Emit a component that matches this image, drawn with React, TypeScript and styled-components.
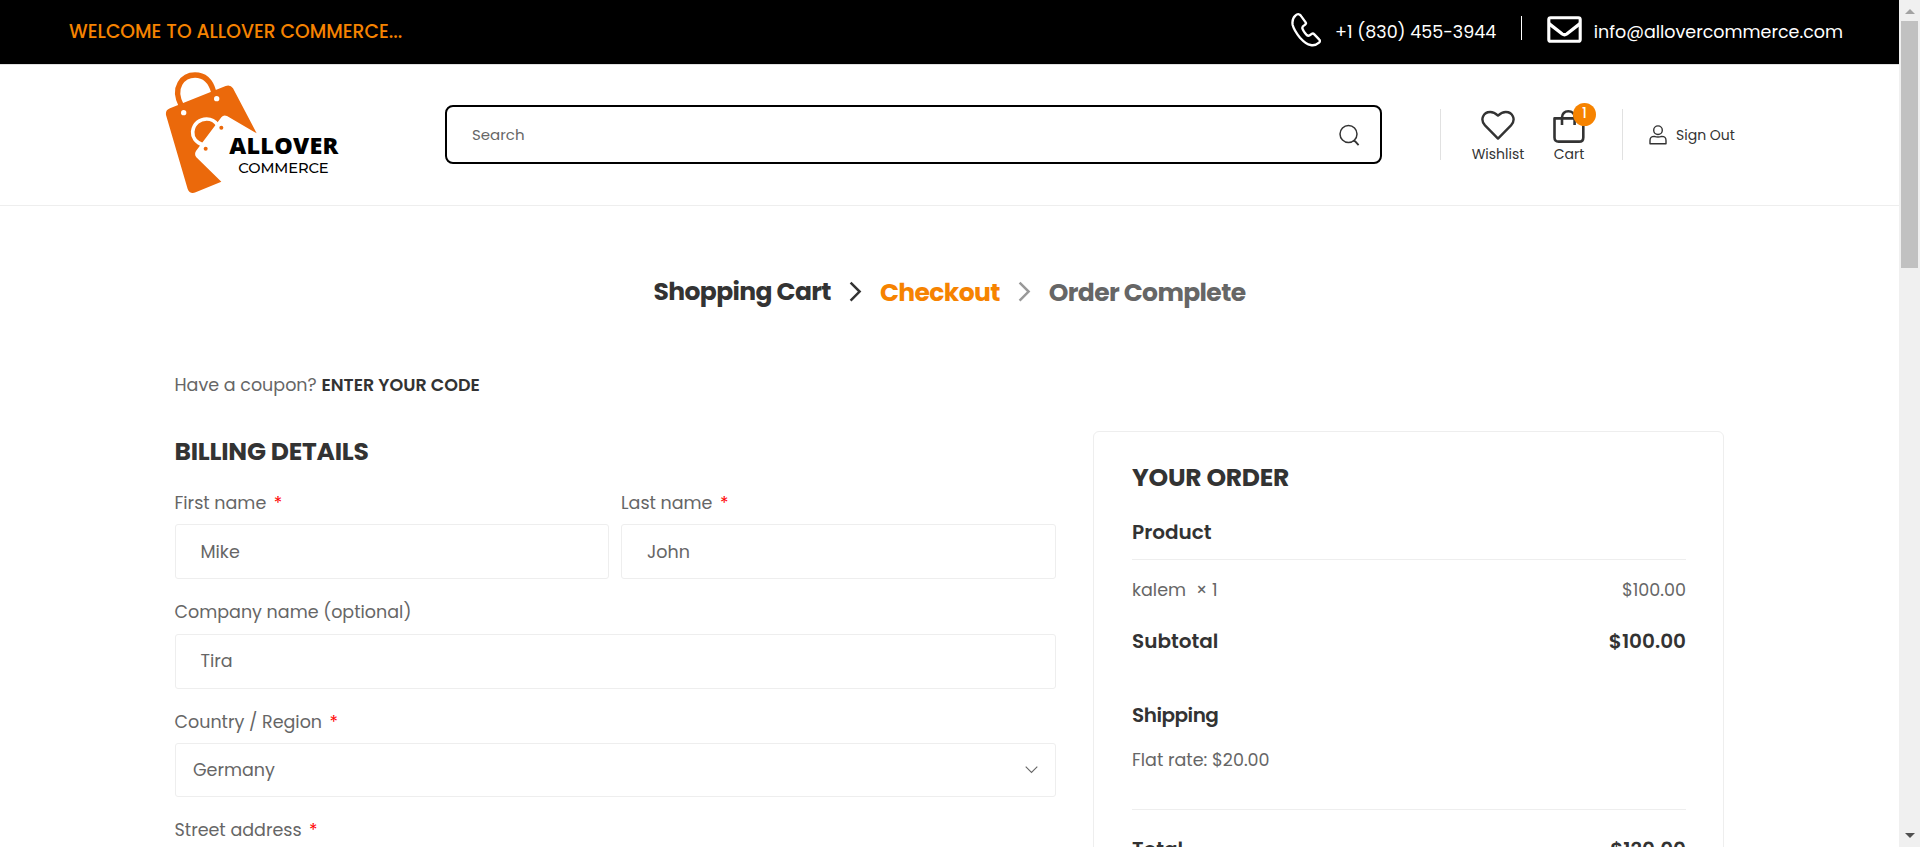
import React from "react";
import styled, { createGlobalStyle } from "styled-components";

const GlobalStyle = createGlobalStyle`
  *, *::before, *::after { box-sizing: border-box; }
  body {
    margin: 0;
    background: #fff;
    color: #666;
    font-family: Poppins, Inter, "Liberation Sans", sans-serif;
    font-size: 17.5px;
    overflow: hidden;
  }
  h2, h3, h4, p { margin: 0; }
`;

const Window = styled.div`
  display: flex;
  height: 847px;
  overflow: hidden;
`;

const Page = styled.div`
  width: 1899px;
  flex: none;
  overflow: hidden;
`;

/* Top bar */
const TopBar = styled.div`
  display: flex;
  align-items: center;
  justify-content: space-between;
  height: 65px;
  padding: 0 56px 1px 69px;
  background: #000;
  border-bottom: 1px solid #e1e1e1;
  color: #fff;
  white-space: nowrap;
`;

const Welcome = styled.span`
  color: #f68300;
  font-size: 18.75px;
  font-weight: 500;
`;

const Contacts = styled.div`
  display: flex;
  align-items: center;

  svg { flex: none; margin-bottom: 4px; }
`;

const ContactText = styled.span<{ $gap: number }>`
  margin-left: ${(p) => p.$gap}px;
`;

const TopDivider = styled.span`
  width: 1px;
  height: 24px;
  margin: 0 25px 7px 24.5px;
  background: #fff;
`;

/* Header */
const Header = styled.header`
  display: flex;
  align-items: center;
  height: 141px;
  padding: 0 0 1px 155px;
  border-bottom: 1px solid #eee;
  color: #333;
`;

const Logo = styled.svg`
  width: 200px;
  height: 135px;
  margin-bottom: 5px;
  flex: none;
`;

const SearchBox = styled.div`
  display: flex;
  align-items: center;
  justify-content: space-between;
  width: 937px;
  height: 59px;
  margin-left: 90px;
  padding: 0 20px 0 25px;
  border: 2px solid #000;
  border-radius: 8px;
  color: #666;
  font-size: 15px;
`;

const HeaderDivider = styled.span<{ $left: number; $right: number }>`
  width: 1px;
  height: 51px;
  margin: 0 ${(p) => p.$right}px 0 ${(p) => p.$left}px;
  background: #e1e1e1;
`;

const IconLink = styled.div<{ $width: number }>`
  position: relative;
  display: flex;
  flex-direction: column;
  align-items: center;
  justify-content: space-between;
  width: ${(p) => p.$width}px;
  height: 55px;
  margin-top: 4px;
  font-size: 14px;
  line-height: 20px;

  & + & { margin-left: 29px; }
`;

const CartBadge = styled.span`
  position: absolute;
  top: -6px;
  left: 20px;
  width: 23px;
  height: 23px;
  border-radius: 50%;
  background: #f68300;
  color: #fff;
  font-size: 13.75px;
  font-weight: 500;
  line-height: 21px;
  text-align: center;
`;

const Account = styled.div`
  display: flex;
  align-items: center;
  gap: 9px;
  padding-top: 1px;
  font-size: 14px;
`;

/* Checkout steps */
const Steps = styled.nav`
  display: flex;
  align-items: center;
  justify-content: center;
  gap: 18px;
  margin-top: 67px;
  height: 38px;
`;

const Step = styled.h3<{ $color: string; $drop?: number }>`
  padding-top: ${(p) => p.$drop ?? 0}px;
  color: ${(p) => p.$color};
  font-size: 25px;
  font-weight: 700;
  line-height: 36px;
  letter-spacing: -0.625px;
`;

/* Checkout body */
const Checkout = styled.main`
  margin-left: 174.5px;
  width: 1549.5px;
`;

const Coupon = styled.p`
  margin-top: 59px;
  line-height: 30px;

  b { color: #333; font-weight: 600; }
`;

const Columns = styled.div`
  display: grid;
  grid-template-columns: 881.5px 631px;
  column-gap: 37px;
  align-items: start;
  margin-top: 31px;
`;

const Heading = styled.h2`
  color: #333;
  font-size: 25px;
  font-weight: 700;
  line-height: 36px;
  letter-spacing: -0.25px;
`;

const Billing = styled.section`
  padding-top: 3px;
`;

const FieldRow = styled.div`
  display: grid;
  grid-template-columns: 434.5px 435px;
  gap: 12px;
`;

const Field = styled.div<{ $gap?: number }>`
  margin-top: ${(p) => p.$gap ?? 21}px;
`;

const Label = styled.label`
  display: block;
  line-height: 24px;
`;

const Required = styled.span`
  margin-left: 7.5px;
  color: #f00;
`;

const Control = styled.div<{ $tight?: boolean }>`
  display: flex;
  align-items: center;
  justify-content: space-between;
  height: 55px;
  margin-top: ${(p) => (p.$tight ? 10 : 9)}px;
  padding: 0 25px ${(p) => (p.$tight ? 2 : 0)}px;
  border: 1px solid #eee;
  border-radius: 3px;
`;

const SelectControl = styled(Control)`
  height: 54px;
  padding: 0 17px 0 17.5px;
  margin-top: 9px;
`;

const OrderCard = styled.aside`
  height: 480px;
  padding: 28px 37px 0 38px;
  border: 1px solid #eee;
  border-radius: 6px;
`;

const OrderRow = styled.div<{ $strong?: boolean; $gap: number }>`
  display: flex;
  justify-content: space-between;
  margin-top: ${(p) => p.$gap}px;
  line-height: 30px;
  ${(p) => p.$strong && "color: #333; font-size: 20px; font-weight: 600;"}
`;

const ProductHead = styled(OrderRow)`
  height: 43px;
  border-bottom: 1px solid #eee;
`;

const ShippingTitle = styled.h4`
  margin-top: 44px;
  color: #333;
  font-size: 20px;
  font-weight: 600;
  line-height: 30px;
  letter-spacing: -0.5px;
`;

const ShippingRate = styled.p`
  margin-top: 15px;
  height: 65px;
  border-bottom: 1px solid #eee;
  line-height: 30px;
`;

const Quantity = styled.span`
  margin-left: 10px;
`;

/* Window scrollbar */
const ScrollTrack = styled.div`
  display: flex;
  flex-direction: column;
  align-items: center;
  justify-content: space-between;
  width: 21px;
  height: 847px;
  padding: 9px 0;
  background: #f0f0f0;
`;

const ScrollTop = styled.div`
  display: flex;
  flex-direction: column;
  align-items: center;
  gap: 7px;
`;

const ScrollThumb = styled.div`
  width: 17px;
  height: 247px;
  background: #c1c1c1;
`;

const LogoMark = () => (
  <Logo viewBox="0 0 600 405">
    <path
      d="M79 122C50 66 84 30 120 30C150 30 168 52 176 80"
      fill="none"
      stroke="#eb690b"
      strokeWidth="16"
    />
    <path
      d="M33 150Q31 135 45 130L212 63Q226 58 234 70L305 205L216 153Q206 148 199 157L123 258Q117 268 124 277L199 350L122 382Q104 388 98 372Z"
      fill="#eb690b"
    />
    <path
      d="M146 241C120 232 112 214 113 200C116 175 135 162 155 162C169 162 180 168 188 180"
      fill="none"
      stroke="#fff"
      strokeWidth="11"
    />
    <circle cx="86" cy="143" r="8" fill="#fff" />
    <circle cx="185" cy="101" r="8" fill="#fff" />
    <circle cx="199" cy="188" r="6" fill="#eb690b" />
    <circle cx="152" cy="251" r="6" fill="#eb690b" />
    <text x="223" y="266" textLength="327" fontFamily="Open Sans" fontWeight="800" fontSize="70" fill="#000">
      ALLOVER
    </text>
    <text x="250" y="325" textLength="271" fontFamily="Montserrat, Poppins" fontWeight="500" fontSize="44" fill="#000">
      COMMERCE
    </text>
  </Logo>
);

const PhoneIcon = () => (
  <svg width="32" height="35" viewBox="30 35 96 105" fill="none" stroke="#fff" strokeWidth="7" strokeLinejoin="round">
    <path d="M57 42Q61 43 64 48L77 66Q80 70 74 74Q66 78 67 84Q69 92 80 104Q86 109 92 103Q98 97 103 102L118 118Q122 122 117 127Q106 137 92 134Q78 132 60 112Q42 90 38 74Q35 56 46 46Q52 40 57 42Z" />
  </svg>
);

const MailIcon = () => (
  <svg width="35" height="27" viewBox="0 0 35 27" fill="none" stroke="#fff" strokeWidth="3.1" strokeLinejoin="round">
    <rect x="1.8" y="1.8" width="31.4" height="23.4" rx="1.8" />
    <path d="M2 7.6L15.3 18Q17.5 19.6 19.7 18L33 7.6" strokeWidth="3.3" />
  </svg>
);

const SearchIcon = () => (
  <svg width="22" height="24" viewBox="0 0 22 24" fill="none" stroke="#333" strokeWidth="1.5">
    <circle cx="10.5" cy="11" r="8.5" />
    <path d="M15.3 17.8L17.2 18.3L20.6 22.2" strokeWidth="1.8" />
  </svg>
);

const HeartIcon = () => (
  <svg width="36" height="32" viewBox="0 0 36 32" fill="none" stroke="#333" strokeWidth="2.4" strokeLinejoin="round">
    <path d="M18 29.6L5 16.4C-0.4 10.4 3.5 3 10.2 3C13.8 3 15.4 4.2 18 6.6C20.6 4.2 22.2 3 25.8 3C32.5 3 36.4 10.4 31 16.4Z" />
  </svg>
);

const BagIcon = () => (
  <svg width="34" height="34" viewBox="0 0 34 34" fill="none" stroke="#333" strokeWidth="2.6">
    <path d="M2.5 9.4H31.3V28.4Q31.3 32.6 27.1 32.6H6.7Q2.5 32.6 2.5 28.4Z" strokeLinejoin="round" />
    <path d="M10 16V8.6C10 4.6 12.6 2.3 16.3 2.3S22.6 4.6 22.6 8.6V16" />
  </svg>
);

const UserIcon = () => (
  <svg width="18" height="20" viewBox="0 0 18 20" fill="none" stroke="#333" strokeWidth="1.4">
    <circle cx="9" cy="5.2" r="4.3" />
    <path d="M1 18.8V15.4Q1 11.4 5.2 11.4Q9 12.6 12.8 11.4Q17 11.4 17 15.4V18.8Z" strokeLinejoin="round" />
  </svg>
);

const StepArrow = ({ color }: { color: string }) => (
  <svg width="13" height="22" viewBox="0 0 13 22" fill="none" stroke={color} strokeWidth="2.5">
    <path d="M1.6 1.6L10.6 10.6L1.6 19.6" />
  </svg>
);

const SelectArrow = () => (
  <svg width="13" height="8" viewBox="0 0 13 8" fill="none" stroke="#666" strokeWidth="1.1">
    <path d="M0.7 0.7L6.5 6.5L12.3 0.7" />
  </svg>
);

type TextFieldProps = { label: string; value: string; required?: boolean; gap?: number; tight?: boolean };

const TextField = ({ label, value, required, gap, tight }: TextFieldProps) => (
  <Field $gap={gap}>
    <Label>
      {label}
      {required && <Required>*</Required>}
    </Label>
    <Control $tight={tight}>{value}</Control>
  </Field>
);

export default function App() {
  return (
    <Window>
      <GlobalStyle />
      <Page>
        <TopBar>
          <Welcome>WELCOME TO ALLOVER COMMERCE...</Welcome>
          <Contacts>
            <PhoneIcon />
            <ContactText $gap={13}>+1 (830) 455-3944</ContactText>
            <TopDivider />
            <MailIcon />
            <ContactText $gap={12}>info@allovercommerce.com</ContactText>
          </Contacts>
        </TopBar>

        <Header>
          <LogoMark />
          <SearchBox>
            Search
            <SearchIcon />
          </SearchBox>
          <HeaderDivider $left={58} $right={31} />
          <IconLink $width={52}>
            <HeartIcon />
            Wishlist
          </IconLink>
          <IconLink $width={32}>
            <BagIcon />
            <CartBadge>1</CartBadge>
            Cart
          </IconLink>
          <HeaderDivider $left={37} $right={26} />
          <Account>
            <UserIcon />
            Sign Out
          </Account>
        </Header>

        <Steps>
          <Step $color="#333">Shopping Cart</Step>
          <StepArrow color="#333" />
          <Step $color="#f68300" $drop={2}>Checkout</Step>
          <StepArrow color="#999" />
          <Step $color="#666" $drop={2}>Order Complete</Step>
        </Steps>

        <Checkout>
          <Coupon>
            Have a coupon? <b>ENTER YOUR CODE</b>
          </Coupon>
          <Columns>
            <Billing>
              <Heading>BILLING DETAILS</Heading>
              <FieldRow>
                <TextField label="First name" value="Mike" required />
                <TextField label="Last name" value="John" required />
              </FieldRow>
              <TextField label="Company name (optional)" value="Tira" tight />
              <Field>
                <Label>
                  Country / Region<Required>*</Required>
                </Label>
                <SelectControl>
                  Germany
                  <SelectArrow />
                </SelectControl>
              </Field>
              <TextField label="Street address" value="" required />
            </Billing>

            <OrderCard>
              <Heading>YOUR ORDER</Heading>
              <ProductHead $strong $gap={21}>Product</ProductHead>
              <OrderRow $gap={15}>
                <span>
                  kalem<Quantity>× 1</Quantity>
                </span>
                <span>$100.00</span>
              </OrderRow>
              <OrderRow $strong $gap={21}>
                <span>Subtotal</span>
                <span>$100.00</span>
              </OrderRow>
              <ShippingTitle>Shipping</ShippingTitle>
              <ShippingRate>Flat rate: $20.00</ShippingRate>
              <OrderRow $strong $gap={24}>
                <span>Total</span>
                <span>$120.00</span>
              </OrderRow>
            </OrderCard>
          </Columns>
        </Checkout>
      </Page>

      <ScrollTrack>
        <ScrollTop>
          <svg width="10" height="5" viewBox="0 0 10 5">
            <path d="M5 0L10 5H0Z" fill="#a3a3a3" />
          </svg>
          <ScrollThumb />
        </ScrollTop>
        <svg width="10" height="5" viewBox="0 0 10 5">
          <path d="M0 0H10L5 5Z" fill="#505050" />
        </svg>
      </ScrollTrack>
    </Window>
  );
}
